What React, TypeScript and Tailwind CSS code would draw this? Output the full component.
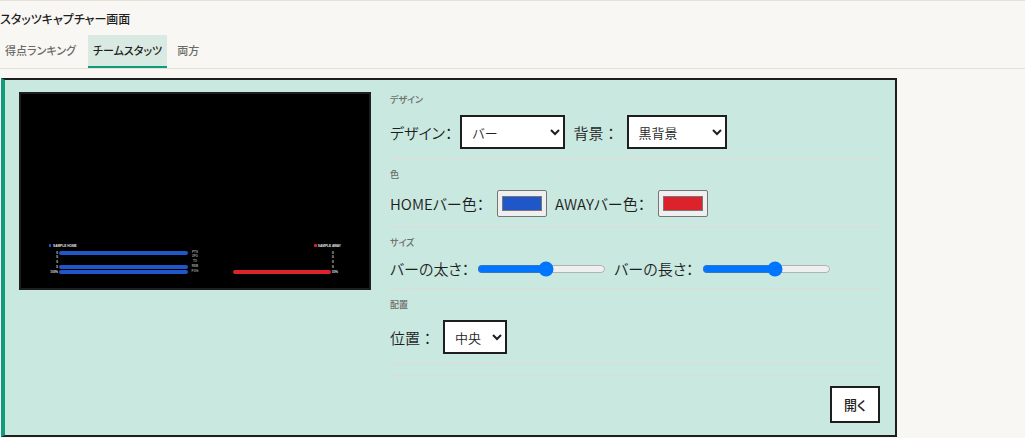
import { useState } from "react";
import type { ReactNode } from "react";

const TABS = ["得点ランキング", "チームスタッツ", "両方"];

const STATS = [
  { y: 253, label: "PTS", home: "0", away: "0", homeLength: 129, awayLength: 0 },
  { y: 257, label: "2FG", home: "0", away: "0", homeLength: 0, awayLength: 0 },
  { y: 262, label: "TO", home: "0", away: "0", homeLength: 0, awayLength: 0 },
  { y: 267, label: "REB", home: "5", away: "0", homeLength: 129, awayLength: 0 },
  { y: 272, label: "FG%", home: "100%", away: "50%", homeLength: 129, awayLength: 98 },
];

function Preview({ home, away }: { home: string; away: string }) {
  return (
    <svg viewBox="21 94 348 194" className="block w-full" role="img" aria-label="プレビュー">
      <rect x="49" y="244" width="2" height="3" rx="0.5" fill={home} />
      <rect x="314" y="244" width="3" height="3" rx="1" fill={away} />
      <g fill="#e8e8e8" fontFamily="Liberation Sans, sans-serif" fontWeight="700" fontSize="3">
        <text x="53" y="247" fontSize="3.2">SAMPLE HOME</text>
        <text x="341" y="247" fontSize="3.2" textAnchor="end">SAMPLE AWAY</text>
        {STATS.map((s) => (
          <g key={s.label}>
            <text x="58" y={s.y + 1} textAnchor="end">{s.home}</text>
            <text x="332" y={s.y + 1}>{s.away}</text>
            <text x="195" y={s.y} textAnchor="middle" fill="#a0a0a0">{s.label}</text>
            {s.homeLength > 0 && (
              <rect x="59" y={s.y - 2} width={s.homeLength} height="4" rx="2" fill={home} />
            )}
            {s.awayLength > 0 && (
              <rect x={331 - s.awayLength} y={s.y - 2} width={s.awayLength} height="4" rx="2" fill={away} />
            )}
          </g>
        ))}
      </g>
    </svg>
  );
}

function Section({ title, children }: { title: string; children: ReactNode }) {
  return (
    <section className="mb-2 border-b border-[#e0dcd5] pb-[9px]">
      <h3 className="mb-2 text-[9px] leading-[15px] font-medium text-[#6b6b66]">{title}</h3>
      <div className="flex flex-wrap items-center gap-x-2">{children}</div>
    </section>
  );
}

const label = "flex items-center gap-2 text-[15px] leading-[21px] font-[350] whitespace-nowrap";
const select = "h-[34px] border-2 border-[#1e1e1e] bg-white px-1.5 text-[13px] font-[350]";
const color = "h-[27px] w-[50px] rounded-xs border border-[#767676] bg-[#efefef] px-0.5 py-px";

export default function App() {
  const [tab, setTab] = useState(1);
  const [home, setHome] = useState("#1f57c8");
  const [away, setAway] = useState("#dc232b");
  return (
    <main className="min-h-screen border-t border-[#e2e0d8] bg-[#f9f7f3] pb-px font-['Noto_Sans_CJK_JP',sans-serif] text-[#1e1e1e] [font-feature-settings:'palt']">
      <h2 className="pt-2 text-xs leading-5 font-medium">スタッツキャプチャー画面</h2>
      <nav className="mt-1.5 flex border-b border-[#e2e0d8]">
        {TABS.map((name, i) => (
          <button
            key={name}
            type="button"
            onClick={() => setTab(i)}
            className={
              i === tab
                ? "h-[33px] border-b-2 border-[#0f9b7c] bg-[#d9eae2] px-[5px] text-[11px] font-medium"
                : "h-[33px] border-b-2 border-transparent px-2.5 text-[11px] font-medium text-[#6b6b66] first:pl-[5px] first:pr-3"
            }
          >
            {name}
          </button>
        ))}
      </nav>
      <div className="mt-[9px] ml-px flex max-w-[896px] items-start gap-[19px] border-2 border-l-4 border-[#1e1e1e] border-l-[#0f9b7c] bg-[#c9e8e0] pt-3 pr-[15px] pb-3 pl-3.5">
        <div className="w-[352px] shrink-0 border-2 border-[#1e1e1e] bg-black">
          <Preview home={home} away={away} />
        </div>
        <div className="min-w-0 flex-1">
          <Section title="デザイン">
            <label className={label}>
              <span className="min-w-[62px]">デザイン：</span>
              <select className={`${select} w-[105px]`}>
                <option>バー</option>
              </select>
            </label>
            <label className={label}>
              <span className="[font-feature-settings:normal]">背景：</span>
              <select className={`${select} w-[100px]`}>
                <option>黒背景</option>
              </select>
            </label>
          </Section>
          <Section title="色">
            <label className={label}>
              <span className="min-w-[99px]">HOMEバー色：</span>
              <input type="color" className={color} value={home} onChange={(e) => setHome(e.target.value)} />
            </label>
            <label className={label}>
              <span className="min-w-[95px]">AWAYバー色：</span>
              <input type="color" className={color} value={away} onChange={(e) => setAway(e.target.value)} />
            </label>
          </Section>
          <Section title="サイズ">
            <label className={label}>
              バーの太さ：
              <input type="range" min="0" max="100" defaultValue="54" className="w-[129px]" />
            </label>
            <label className={label}>
              バーの長さ：
              <input type="range" min="0" max="100" defaultValue="58" className="w-[129px]" />
            </label>
          </Section>
          <Section title="配置">
            <label className={label}>
              <span className="[font-feature-settings:normal]">位置：</span>
              <select className={`${select} w-16`}>
                <option>中央</option>
              </select>
            </label>
          </Section>
          <div className="mt-[11px] flex justify-end border-t border-[#e0dcd5] pt-2.5">
            <button type="button" className="h-[37px] border-2 border-[#1e1e1e] bg-white px-3 text-[13px] font-medium">
              開く
            </button>
          </div>
        </div>
      </div>
    </main>
  );
}
